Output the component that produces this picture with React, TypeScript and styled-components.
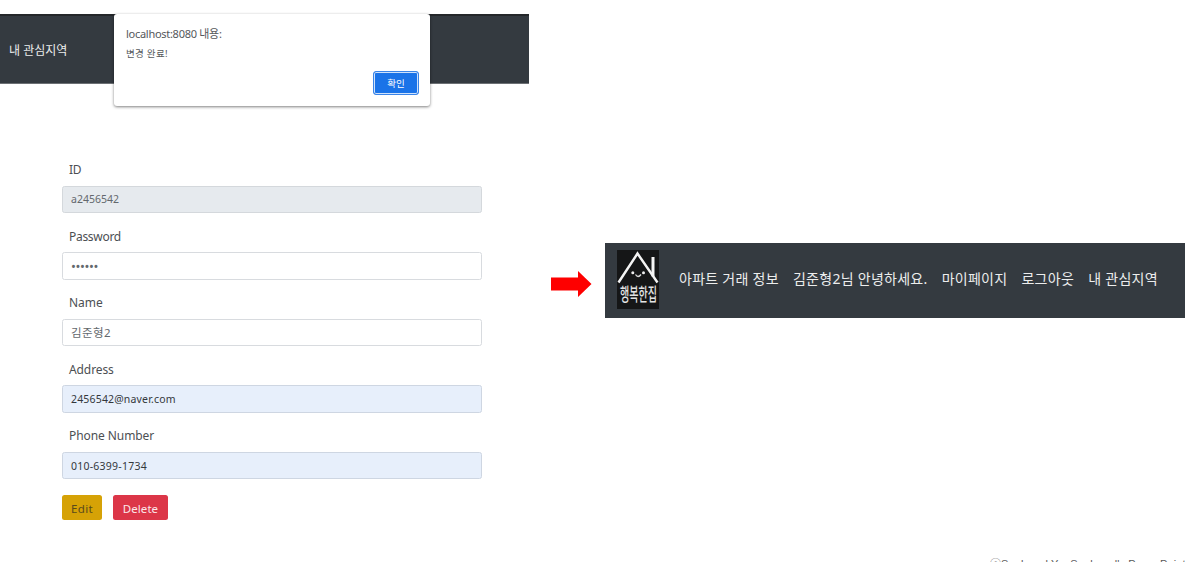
import React from "react";
import styled, { createGlobalStyle } from "styled-components";

const Global = createGlobalStyle`
  * { box-sizing: border-box; }
  body { margin: 0; background: #fff; overflow: hidden; font-family: "Noto Sans", "Noto Sans CJK KR", sans-serif; }
`;

const Slide = styled.main`
  height: 562px;
  display: grid;
  grid-template-columns: 529px 76px 581px;
  overflow: hidden;
`;

const Page = styled.section`
  position: relative;
  padding-top: 14px;
`;

const TopBar = styled.header`
  height: 70px;
  display: flex;
  align-items: center;
  padding: 3px 0 0 9px;
  background: #343a40;
  border-top: 2px solid #24272a;
  border-bottom: 1px solid #6c7074;
`;

const Text = styled.span<{ $size: number; $track?: number }>`
  font-size: ${(p) => p.$size}px;
  letter-spacing: ${(p) => p.$track ?? 0}px;
  line-height: 1.4;
  white-space: nowrap;
`;

const BarText = styled(Text)`
  color: #eceded;
`;

const Alert = styled.div`
  position: absolute;
  left: 114px;
  top: 14px;
  width: 316px;
  height: 92px;
  padding: 12px 11px 11px 12px;
  display: flex;
  flex-direction: column;
  background: #fff;
  border-radius: 3px;
  box-shadow: 0 1px 3px rgba(0, 0, 0, 0.5);
`;

const AlertTitle = styled(Text)`
  color: #55585b;
  height: 21px;
`;

const AlertBody = styled(Text)`
  color: #55585b;
`;

const Confirm = styled.button`
  margin: auto 0 0 auto;
  flex: none;
  width: 46px;
  height: 24px;
  padding: 0;
  border: 1px solid #3a84e8;
  border-radius: 3px;
  box-shadow: inset 0 0 0 1px #cfe2fb;
  background: #1a73e8;
  color: #fff;
  font: 9.5px "Noto Sans CJK KR", sans-serif;
`;

const Form = styled.form`
  width: 420px;
  margin: 63px 0 0 62px;
`;

const Field = styled.div`
  height: 66.6px;
  display: flex;
  flex-direction: column;
`;

const Label = styled.label<{ $track: number }>`
  height: 38.5px;
  padding: 14px 0 0 7px;
  color: #4c4f53;
  font-size: 12px;
  line-height: 18px;
  letter-spacing: ${(p) => p.$track}px;
`;

const tones = {
  disabled: { bg: "#e6eaee", fg: "#63686d", line: "#d4d8dc" },
  plain: { bg: "#fff", fg: "#63686d", line: "#d8dbdf" },
  filled: { bg: "#e7effb", fg: "#34383c", line: "#ced6e2" },
};

const Value = styled.div<{ $tone: keyof typeof tones; $track: number; $size?: number }>`
  height: 27.5px;
  padding: 0 8px;
  display: flex;
  align-items: center;
  border: 1px solid ${(p) => tones[p.$tone].line};
  border-radius: 2.5px;
  background: ${(p) => tones[p.$tone].bg};
  color: ${(p) => tones[p.$tone].fg};
  font-size: ${(p) => p.$size ?? 10.5}px;
  letter-spacing: ${(p) => p.$track}px;
`;

const Actions = styled.div`
  display: flex;
  gap: 11px;
  margin-top: 15px;
`;

const Button = styled.button<{ $kind: "edit" | "remove" }>`
  width: ${(p) => (p.$kind === "edit" ? 40 : 55)}px;
  height: 25px;
  padding: 2px 0 0;
  border: 0;
  border-radius: 2.5px;
  background: ${(p) => (p.$kind === "edit" ? "#d6a206" : "#dc3648")};
  color: ${(p) => (p.$kind === "edit" ? "#5a4a1c" : "#fbe6e8")};
  font: 11.5px "Noto Sans", sans-serif;
  letter-spacing: ${(p) => (p.$kind === "edit" ? 0.4 : 0.05)}px;
`;

const Between = styled.div`
  padding: 271px 0 0 22px;
  svg { display: block; }
`;

const Result = styled.section`
  display: flex;
  flex-direction: column;
  padding-top: 243px;
`;

const NavBar = styled.nav`
  flex: none;
  width: 580px;
  height: 75px;
  display: flex;
  align-items: center;
  background: #343a40;
  padding-left: 12px;
`;

const Logo = styled.svg`
  flex: none;
  margin: -3px 20px 0 0;
`;

const Links = styled.div`
  display: flex;
  gap: 14.1px;
  margin-top: -3px;
`;

const Credit = styled.footer`
  margin: 238px 0 0 385px;
  color: #5a5a5a;
  font: 11px/16px "Liberation Sans", "Noto Sans CJK KR", sans-serif;
  letter-spacing: 0.12px;
  white-space: nowrap;
`;

const fields: {
  label: string;
  value: string;
  tone: keyof typeof tones;
  labelTrack: number;
  valueTrack: number;
  size?: number;
}[] = [
  { label: "ID", value: "a2456542", tone: "disabled", labelTrack: -0.2, valueTrack: 0 },
  { label: "Password", value: "••••••", tone: "plain", labelTrack: -0.3, valueTrack: -0.4, size: 13 },
  { label: "Name", value: "김준형2", tone: "plain", labelTrack: 0, valueTrack: 0.4, size: 11.5 },
  { label: "Address", value: "2456542@naver.com", tone: "filled", labelTrack: -0.1, valueTrack: 0.17 },
  { label: "Phone Number", value: "010-6399-1734", tone: "filled", labelTrack: -0.08, valueTrack: 0.24 },
];

const links = ["아파트 거래 정보", "김준형2님 안녕하세요.", "마이페이지", "로그아웃", "내 관심지역"];

export default function App() {
  return (
    <Slide>
      <Global />
      <Page>
        <TopBar>
          <BarText $size={12}>내 관심지역</BarText>
        </TopBar>
        <Form>
          {fields.map((f) => (
            <Field key={f.label}>
              <Label $track={f.labelTrack}>{f.label}</Label>
              <Value $tone={f.tone} $track={f.valueTrack} $size={f.size}>
                {f.value}
              </Value>
            </Field>
          ))}
          <Actions>
            <Button type="button" $kind="edit">Edit</Button>
            <Button type="button" $kind="remove">Delete</Button>
          </Actions>
        </Form>
        <Alert>
          <AlertTitle $size={11} $track={-0.28}>localhost:8080 내용:</AlertTitle>
          <AlertBody $size={9.5} $track={0.3}>변경 완료!</AlertBody>
          <Confirm>확인</Confirm>
        </Alert>
      </Page>
      <Between>
        <svg width="42" height="26" viewBox="0 0 42 26">
          <path d="M0 6.5H27V0L40.5 13L27 26V19.5H0Z" fill="#fe0000" />
        </svg>
      </Between>
      <Result>
        <NavBar>
          <Logo width="42" height="59" viewBox="0 0 42 59">
            <rect width="42" height="59" fill="#151617" />
            <path d="M1.5 32.5L20.5 3.5L40.5 32.5" fill="none" stroke="#f4f4f4" strokeWidth="2.4" />
            <path d="M36 26.5V7" fill="none" stroke="#f4f4f4" strokeWidth="3" />
            <path d="M18.5 24.5Q21 28.5 24 24.5" fill="none" stroke="#ddd" strokeWidth="1.3" />
            <circle cx="15.8" cy="22.8" r="1.5" fill="#eee" />
            <circle cx="26.5" cy="22.8" r="1.5" fill="#eee" />
            <text
              x="3"
              y="50.8"
              textLength="37"
              lengthAdjust="spacingAndGlyphs"
              fill="#e4e4e4"
              fontSize="18"
              fontWeight="500"
              fontFamily="Noto Sans CJK KR, sans-serif"
            >
              행복한집
            </text>
          </Logo>
          <Links>
            {links.map((l) => (
              <BarText key={l} $size={14} $track={0.27}>{l}</BarText>
            ))}
          </Links>
        </NavBar>
        <Credit>ⓒSaebyeol Yu. Saebyeol's PowerPoint</Credit>
      </Result>
    </Slide>
  );
}
